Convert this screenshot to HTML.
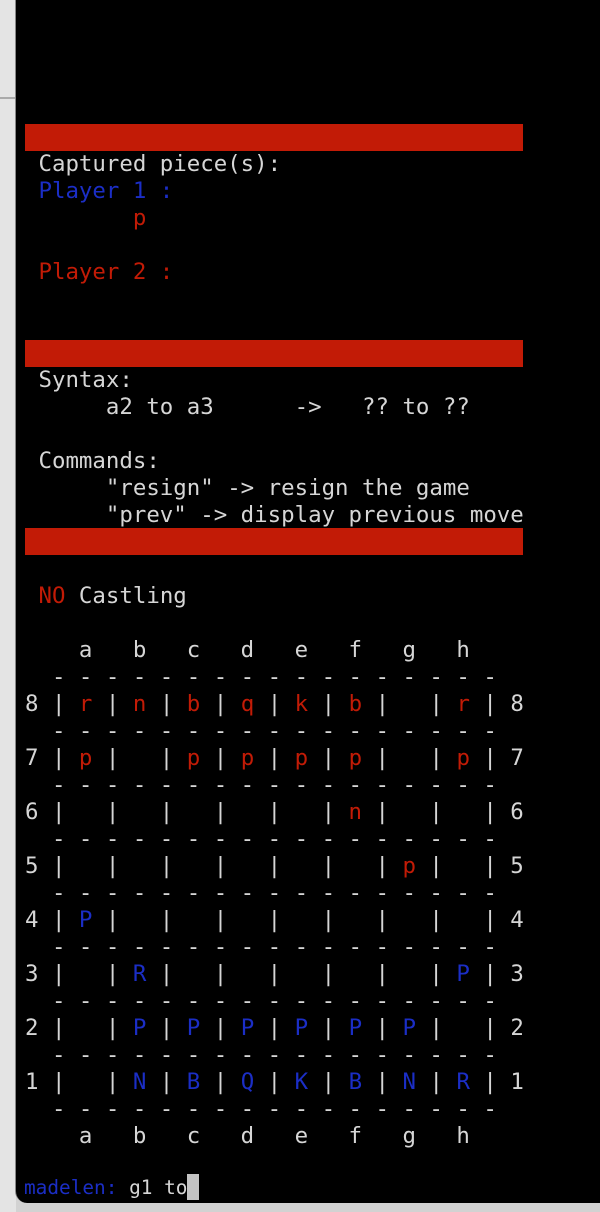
<!DOCTYPE html>
<html><head><meta charset="utf-8"><style>
html,body{margin:0;padding:0;width:600px;height:1212px;overflow:hidden;background:#d2d2d2;}
#left{position:absolute;left:0;top:0;width:16px;height:1212px;background:#e4e4e4;}
#term{position:absolute;left:15px;top:0;width:585px;height:1203px;background:#000;border-left:1px solid #888;border-bottom-left-radius:12px;}
.l{position:absolute;left:25px;height:27px;line-height:27px;font-family:"DejaVu Sans Mono","Liberation Mono",monospace;font-size:22.4px;color:#d6d6d6;white-space:pre;margin:0;}
.r{color:#c21b06}.b{color:#1b2ec6}
.bar{position:absolute;left:25px;width:498px;height:27px;background:#c21b06;}
#cur{display:inline-block;width:12px;height:26px;background:#c4c4c4;vertical-align:-6px;}
</style></head><body>
<div id="left"></div>
<div style="position:absolute;left:0;top:97px;width:16px;height:2px;background:#aaa"></div>
<div id="term"></div>
<div class="bar" style="top:124px"></div>
<div class="l" style="top:151px"> Captured piece(s):</div>
<div class="l b" style="top:178px"> Player 1 :</div>
<div class="l r" style="top:205px">        p</div>
<div class="l r" style="top:259px"> Player 2 :</div>
<div class="bar" style="top:340px"></div>
<div class="l" style="top:367px"> Syntax:</div>
<div class="l" style="top:394px">      a2 to a3      -&gt;   ?? to ??</div>
<div class="l" style="top:448px"> Commands:</div>
<div class="l" style="top:475px">      "resign" -&gt; resign the game</div>
<div class="l" style="top:502px">      "prev" -&gt; display previous move</div>
<div class="bar" style="top:528px"></div>
<div class="l" style="top:583px"> <span class="r">NO</span> Castling</div>
<div class="l" style="top:637px">    a   b   c   d   e   f   g   h</div>
<div class="l" style="top:664px">  - - - - - - - - - - - - - - - - -</div>
<div class="l" style="top:691px">8 | <span class="r">r</span> | <span class="r">n</span> | <span class="r">b</span> | <span class="r">q</span> | <span class="r">k</span> | <span class="r">b</span> |   | <span class="r">r</span> | 8</div>
<div class="l" style="top:718px">  - - - - - - - - - - - - - - - - -</div>
<div class="l" style="top:745px">7 | <span class="r">p</span> |   | <span class="r">p</span> | <span class="r">p</span> | <span class="r">p</span> | <span class="r">p</span> |   | <span class="r">p</span> | 7</div>
<div class="l" style="top:772px">  - - - - - - - - - - - - - - - - -</div>
<div class="l" style="top:799px">6 |   |   |   |   |   | <span class="r">n</span> |   |   | 6</div>
<div class="l" style="top:826px">  - - - - - - - - - - - - - - - - -</div>
<div class="l" style="top:853px">5 |   |   |   |   |   |   | <span class="r">p</span> |   | 5</div>
<div class="l" style="top:880px">  - - - - - - - - - - - - - - - - -</div>
<div class="l" style="top:907px">4 | <span class="b">P</span> |   |   |   |   |   |   |   | 4</div>
<div class="l" style="top:934px">  - - - - - - - - - - - - - - - - -</div>
<div class="l" style="top:961px">3 |   | <span class="b">R</span> |   |   |   |   |   | <span class="b">P</span> | 3</div>
<div class="l" style="top:988px">  - - - - - - - - - - - - - - - - -</div>
<div class="l" style="top:1015px">2 |   | <span class="b">P</span> | <span class="b">P</span> | <span class="b">P</span> | <span class="b">P</span> | <span class="b">P</span> | <span class="b">P</span> |   | 2</div>
<div class="l" style="top:1042px">  - - - - - - - - - - - - - - - - -</div>
<div class="l" style="top:1069px">1 |   | <span class="b">N</span> | <span class="b">B</span> | <span class="b">Q</span> | <span class="b">K</span> | <span class="b">B</span> | <span class="b">N</span> | <span class="b">R</span> | 1</div>
<div class="l" style="top:1096px">  - - - - - - - - - - - - - - - - -</div>
<div class="l" style="top:1123px">    a   b   c   d   e   f   g   h</div>
<div class="l" style="top:1174px;left:24px;font-size:19.4px"><span class="b">madelen:</span> g1 to<span id="cur"></span></div>
</body></html>
